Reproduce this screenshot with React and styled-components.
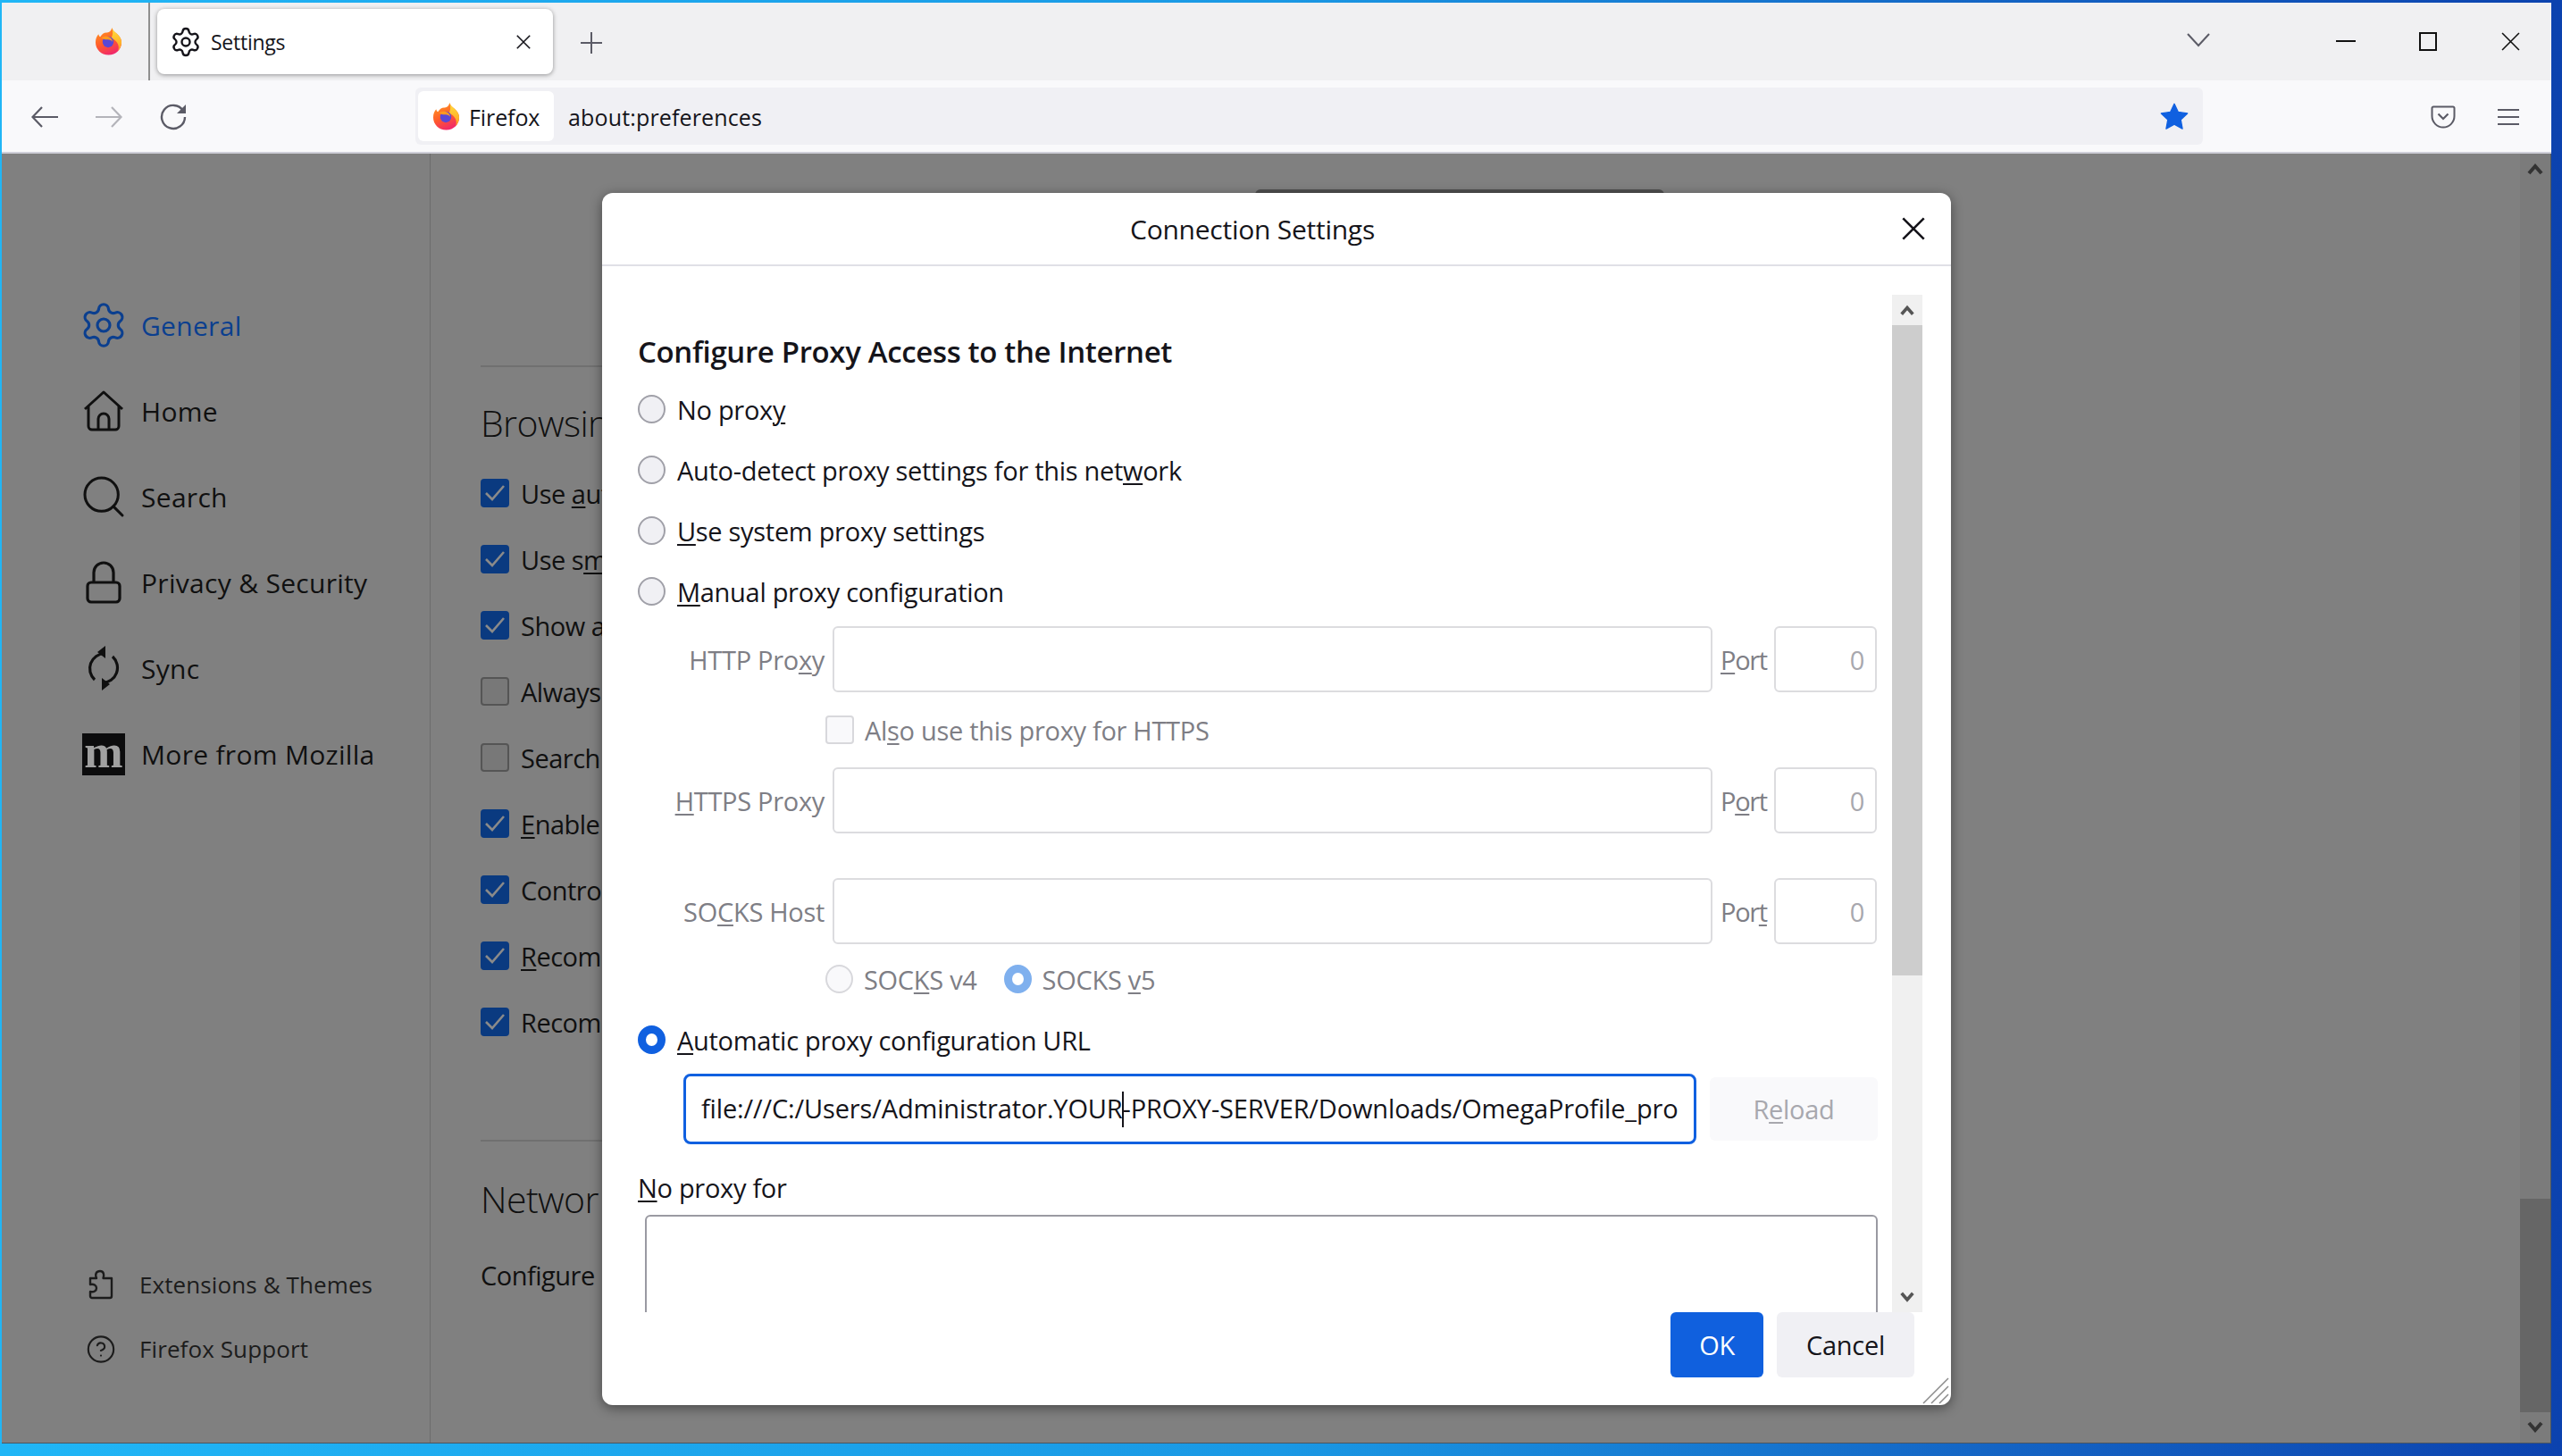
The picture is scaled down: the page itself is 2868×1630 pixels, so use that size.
import React from 'react';
import styled, { createGlobalStyle } from 'styled-components';
import { Settings as GearIcon, Search as SearchIcon, CircleHelp } from 'lucide-react';

const FONT = '"Open Sans", "Noto Sans", "Liberation Sans", sans-serif';

const Global = createGlobalStyle`
  html, body { margin: 0; padding: 0; background: #1a98e4; }
  * { box-sizing: border-box; }
  u { text-underline-offset: 3px; text-decoration-thickness: 2px; }
`;

const Desktop = styled.div`
  position: relative;
  width: 2868px;
  height: 1630px;
  overflow: hidden;
  padding: 3px 12px 14px 2px;
  background: linear-gradient(90deg, #20b6f6 0%, #1a98e4 50%, #1464c4 78%, #0c42ae 100%);
  font-family: ${FONT};
  color: #15141a;
`;

const Window = styled.div`
  display: flex;
  flex-direction: column;
  height: 100%;
`;

/* browser chrome */
const TabStrip = styled.div`
  display: flex;
  align-items: flex-start;
  height: 87px;
  flex: none;
  background: #f0f0f2;
`;

const PinnedTab = styled.div`
  display: flex;
  align-items: center;
  justify-content: center;
  width: 166px;
  height: 87px;
  padding-left: 74px;
  padding-right: 0;
  border-right: 2px solid #8f8f8f;
  flex: none;
`;

const ActiveTab = styled.div`
  display: flex;
  align-items: center;
  width: 443px;
  height: 73px;
  margin: 7px 0 0 8px;
  padding: 0 25px 0 14px;
  background: #fff;
  border-radius: 8px;
  box-shadow: 0 1px 5px rgba(0, 0, 0, 0.4);
  flex: none;
  svg { flex: none; }
`;

const TabTitle = styled.span`
  margin-left: 10px;
  font-size: 23px;
  letter-spacing: -0.25px;
  flex: 1;
`;

const NewTab = styled.div`
  display: flex;
  margin: 33px 0 0 31px;
  color: #5b5b66;
`;

const StripRight = styled.div`
  display: flex;
  align-items: center;
  height: 87px;
  margin-left: auto;
  color: #111;
`;

const ListTabs = styled.div`
  display: flex;
  margin-right: 106px;
  margin-top: -3px;
  color: #5b5b66;
`;

const Caption = styled.div`
  display: flex;
  justify-content: center;
  width: 92px;
`;

const Toolbar = styled.div`
  display: flex;
  align-items: center;
  height: 82px;
  flex: none;
  background: #f9f9fb;
  border-bottom: 2px solid #cfcfd8;
  padding-left: 33px;
`;

const NavButtons = styled.div`
  display: flex;
  align-items: center;
  gap: 42px;
  width: 430px;
  margin-top: 2px;
  color: #5b5b66;
`;

const UrlBar = styled.div`
  display: flex;
  align-items: center;
  width: 2001px;
  height: 64px;
  padding: 0 16px 0 3px;
  background: #f0f0f4;
  border-radius: 6px;
`;

const Identity = styled.div`
  display: flex;
  align-items: center;
  width: 152px;
  height: 56px;
  padding-left: 16px;
  background: #fff;
  border-radius: 6px;
  font-size: 25px;
  letter-spacing: -0.1px;
  gap: 10px;
  span { padding-top: 2px; }
`;

const UrlText = styled.span`
  margin-left: 16px;
  padding-top: 2px;
  font-size: 25px;
  letter-spacing: 0.15px;
  flex: 1;
`;

const ToolbarRight = styled.div`
  display: flex;
  align-items: center;
  margin: 1px 0 0 255px;
  gap: 47px;
  color: #5b5b66;
`;

/* dimmed preferences page */
const Page = styled.div`
  display: flex;
  flex: 1;
  min-height: 0;
  background: #808080;
  border-bottom: 1px solid #4a5560;
  border-right: 1px solid #4a5560;
  color: #101010;
`;

const Sidebar = styled.div`
  display: flex;
  flex-direction: column;
  width: 480px;
  flex: none;
  border-right: 1px solid #6c6c6c;
  padding: 144px 0 69px 90px;
`;

const NavRow = styled.div`
  display: flex;
  align-items: center;
  height: 96px;
  gap: 18px;
  font-size: 30px;
  letter-spacing: 0.3px;
  color: ${p => (p.$active ? '#0b3f8f' : '#101010')};
`;

const NavIcon = styled.div`
  display: flex;
  align-items: center;
  justify-content: center;
  width: 48px;
  height: 48px;
  svg { flex: none; }
`;

const MozillaMark = styled.div`
  display: flex;
  align-items: center;
  justify-content: center;
  width: 48px;
  height: 47px;
  padding-bottom: 6px;
  background: #0c0c0d;
  color: #a0a0a0;
  font-family: "Liberation Serif", serif;
  font-weight: 700;
  font-size: 52px;
  line-height: 41px;
  letter-spacing: 0;
`;

const SideFooter = styled.div`
  display: flex;
  flex-direction: column;
  margin-top: auto;
  padding-left: 4px;
`;

const FooterRow = styled.div`
  display: flex;
  align-items: center;
  height: 72px;
  gap: 26px;
  font-size: 26px;
  letter-spacing: 0.1px;
  color: #1c1c1c;
`;

const FooterIcon = styled.div`
  display: flex;
  justify-content: center;
  width: 34px;
`;

const Content = styled.div`
  flex: 1;
  min-width: 0;
  padding-left: 56px;
  overflow: hidden;
`;

const HiddenBox = styled.div`
  width: 458px;
  height: 60px;
  margin: 40px 0 137px 867px;
  border-top: 4px solid #505050;
  border-radius: 6px 6px 0 0;
`;

const Divider = styled.div`
  width: 1000px;
  height: 2px;
  margin-top: ${p => p.$top || 0}px;
  background: #707070;
`;

const SectionTitle = styled.div`
  width: 136px;
  height: 60px;
  margin-top: ${p => p.$top}px;
  overflow: hidden;
  font-size: 41px;
  line-height: 60px;
  font-weight: 300;
  white-space: nowrap;
  letter-spacing: -0.6px;
`;

const PrefList = styled.div`
  margin-top: 12px;
`;

const PrefRow = styled.div`
  display: flex;
  align-items: center;
  width: 136px;
  height: 74px;
  gap: 13px;
  overflow: hidden;
  font-size: 29px;
  white-space: nowrap;
  letter-spacing: -0.5px;
`;

const PrefBox = styled.div`
  display: flex;
  align-items: center;
  justify-content: center;
  width: 32px;
  height: 32px;
  border-radius: 4px;
  flex: none;
  background: ${p => (p.$on ? '#0a3a80' : '#787878')};
  border: 2px solid ${p => (p.$on ? '#0a3a80' : '#555')};
`;

const PlainLine = styled.div`
  margin-top: 36px;
  font-size: 29px;
  white-space: nowrap;
  letter-spacing: -0.5px;
`;

const PageScroll = styled.div`
  display: flex;
  flex-direction: column;
  width: 34px;
  flex: none;
  background: #7b7b7b;
`;

const ScrollEnd = styled.div`
  display: flex;
  align-items: center;
  justify-content: center;
  height: 34px;
  flex: none;
  color: ${p => p.$color || '#333'};
`;

const PageThumb = styled.div`
  height: 239px;
  margin-top: auto;
  background: #666;
`;

/* dialog */
const Dialog = styled.div`
  position: absolute;
  left: 674px;
  top: 216px;
  display: flex;
  flex-direction: column;
  width: 1510px;
  height: 1357px;
  background: #fff;
  border-radius: 12px;
  box-shadow: 0 3px 14px rgba(0, 0, 0, 0.45);
  color: #15141a;
  overflow: hidden;
`;

const DialogHeader = styled.div`
  display: flex;
  align-items: center;
  height: 82px;
  flex: none;
  padding: 0 29px 0 591px;
  border-bottom: 2px solid #e0e0e6;
`;

const DialogTitle = styled.div`
  font-size: 30px;
  font-weight: 500;
  letter-spacing: -0.25px;
`;

const DialogClose = styled.div`
  display: flex;
  margin-left: auto;
`;

const DialogBody = styled.div`
  display: flex;
  height: 1171px;
  flex: none;
`;

const Form = styled.div`
  flex: 1;
  min-width: 0;
  padding: 71px 16px 0 40px;
  overflow: hidden;
  font-size: 29px;
  letter-spacing: -0.3px;
`;

const FormTitle = styled.div`
  height: 50px;
  margin-bottom: 5px;
  font-size: 33px;
  line-height: 50px;
  font-weight: 600;
  letter-spacing: -0.35px;
`;

const OptionRow = styled.div`
  display: flex;
  align-items: center;
  height: ${p => p.$h || 68}px;
  margin-left: ${p => p.$left || 0}px;
  gap: ${p => (p.$muted ? 12 : 13)}px;
  color: ${p => (p.$muted ? '#7e7e85' : 'inherit')};
`;

const Radio = styled.div`
  width: 31px;
  height: 32px;
  border-radius: 50%;
  flex: none;
  border: ${p => {
    if (p.$state === 'on') return '9px solid #1060e0';
    if (p.$state === 'soft') return '9px solid #7fb0ee';
    if (p.$state === 'off') return '2px solid #d8d8dc';
    return '2px solid #a0a0a8';
  }};
  background: ${p => (p.$state === 'on' || p.$state === 'soft' ? '#fff' : p.$state === 'off' ? '#f9f9fb' : '#f0f0f4')};
`;

const RadioSecond = styled(Radio)`
  margin-left: 18px;
`;

const MutedBox = styled.div`
  width: 32px;
  height: 32px;
  border-radius: 4px;
  flex: none;
  background: #f9f9fb;
  border: 2px solid #d8d8dc;
`;

const ProxyRow = styled.div`
  display: flex;
  align-items: center;
  gap: 9px;
  height: 74px;
  margin-top: ${p => p.$top || 0}px;
  color: #7e7e85;
`;

const ProxyLabel = styled.div`
  width: 209px;
  text-align: right;
  flex: none;
`;

const Field = styled.div`
  display: flex;
  align-items: center;
  justify-content: flex-end;
  width: ${p => p.$w}px;
  height: 74px;
  flex: none;
  padding-right: 12px;
  border: 2px solid #dcdcdf;
  border-radius: 6px;
  color: #a8a8ae;
`;

const PortLabel = styled.div`
  width: 51px;
  flex: none;
  white-space: nowrap;
  letter-spacing: -1.3px;
`;

const UrlRow = styled.div`
  display: flex;
  align-items: center;
  gap: 15px;
  height: 79px;
  margin: 9px 0 0 51px;
`;

const UrlField = styled.div`
  display: flex;
  align-items: center;
  width: 1134px;
  height: 79px;
  flex: none;
  padding: 0 17px;
  border: 3px solid #1060e0;
  border-radius: 8px;
  white-space: nowrap;
  overflow: hidden;
  line-height: 40px;
  letter-spacing: -0.15px;
`;

const Caret = styled.span`
  display: inline-block;
  width: 2px;
  height: 40px;
  margin: 0 -1px;
  vertical-align: -10px;
  background: #15141a;
`;

const ReloadButton = styled.div`
  display: flex;
  align-items: center;
  justify-content: center;
  width: 188px;
  height: 71px;
  flex: none;
  background: #f9f9fb;
  border-radius: 6px;
  color: #a8a8ae;
`;

const NoProxyLabel = styled.div`
  height: 50px;
  margin-top: 24px;
  line-height: 50px;
`;

const NoProxyArea = styled.div`
  width: 1380px;
  height: 200px;
  margin: 5px 0 0 8px;
  border: 2px solid #9a9aa2;
  border-radius: 6px;
`;

const FormScroll = styled.div`
  display: flex;
  flex-direction: column;
  justify-content: space-between;
  width: 34px;
  flex: none;
  margin: 32px 32px 0 0;
  background: #f0f0f0;
`;

const FormThumbGroup = styled.div`
  display: flex;
  flex-direction: column;
`;

const FormThumb = styled.div`
  height: 728px;
  flex: none;
  background: #cdcdcd;
`;

const DialogFooter = styled.div`
  position: relative;
  display: flex;
  justify-content: flex-end;
  gap: 15px;
  flex: 1;
  padding-right: 41px;
`;

const DialogButton = styled.div`
  display: flex;
  align-items: center;
  justify-content: center;
  width: ${p => p.$w}px;
  height: 73px;
  font-size: 29px;
  letter-spacing: -0.3px;
  border-radius: 6px;
  background: ${p => (p.$primary ? '#1060de' : '#f0f0f4')};
  color: ${p => (p.$primary ? '#fff' : '#15141a')};
`;

const Resizer = styled.svg`
  position: absolute;
  right: 2px;
  bottom: 1px;
`;

/* drawings */
const FirefoxLogo = ({ size = 31 }) => (
  <svg width={size} height={size} viewBox="0 0 32 32">
    <defs>
      <linearGradient id="ffBody" x1="0.2" y1="0" x2="0.6" y2="1">
        <stop offset="0" stopColor="#ff9a1f" />
        <stop offset="0.55" stopColor="#ff5a2c" />
        <stop offset="1" stopColor="#f0266e" />
      </linearGradient>
      <linearGradient id="ffFlame" x1="0.5" y1="0" x2="0.5" y2="1">
        <stop offset="0" stopColor="#ffe23e" />
        <stop offset="1" stopColor="#ff9a1f" />
      </linearGradient>
    </defs>
    <path d="M20 0c.6 3.2 3 4.6 5.6 7C29 10 31 13 31 17c0 8-6.6 14.5-15 14.5S1 25 1 17C1 13 2.6 9.6 4.4 7.6c.4 1.6 1 2.6 2 3C8 7.5 11 5.4 14 5.6c3 .2 5-2 6-5.6z" fill="url(#ffBody)" />
    <path d="M20 0c.6 3.2 3 4.6 5.6 7C29 10 31 13 31 17c0 4-1.6 7.4-4.2 10 1-2.4 1.2-5 .2-7.6-1.2-3.6-4.4-6.2-8-7.4 2-3 2.4-7.4 1-12z" fill="url(#ffFlame)" />
    <circle cx="15.5" cy="16.5" r="6.4" fill="#5a47d6" />
    <path d="M7.6 11.6c3-2.2 8.6-2.2 11 .4 1.4 1.4 2 2.8 2.2 4.4-1.2-1.8-3.6-3-6-2.8-2.2.2-4.6 0-7.2-2z" fill="#ff9a1f" />
  </svg>
);

const HomeIcon = () => (
  <svg width="46" height="46" viewBox="0 0 46 46" fill="none" stroke="currentColor" strokeWidth="3" strokeLinejoin="round">
    <path d="M2 21 L23 2 L44 21 M6 18 V40 a4 4 0 0 0 4 4 H36 a4 4 0 0 0 4-4 V18" />
    <path d="M17 44 V32 a6 6 0 0 1 12 0 V44" />
  </svg>
);

const LockIcon = () => (
  <svg width="40" height="48" viewBox="0 0 40 48" fill="none" stroke="currentColor" strokeWidth="3.2">
    <path d="M9 24 V13 a11 11 0 0 1 22 0 V24" />
    <rect x="2" y="24" width="36" height="22" rx="4" />
  </svg>
);

const SyncIcon = () => (
  <svg width="38" height="50" viewBox="0 0 38 50" fill="none" stroke="currentColor" strokeWidth="3.2">
    <path d="M20 8.5 A17 17 0 0 0 9 38" />
    <path d="M18 41.5 A17 17 0 0 0 29 12" />
    <path d="M21 0 L21 14 L12 7 Z" fill="currentColor" stroke="none" />
    <path d="M17 50 L17 36 L26 43 Z" fill="currentColor" stroke="none" />
  </svg>
);

const PuzzleIcon = () => (
  <svg width="28" height="34" viewBox="0 0 28 34" fill="none" stroke="currentColor" strokeWidth="2.4" strokeLinejoin="round">
    <path d="M2 10 H9 C7 5 9 2 13 2 C17 2 18 6 16.5 10 H26 V30 a2 2 0 0 1-2 2 H4 a2 2 0 0 1-2-2 V25 C6 26 9 24 9 21 C9 18 6 16 2 17 Z" />
  </svg>
);

const PocketIcon = () => (
  <svg width="28" height="26" viewBox="0 0 28 26" fill="none" stroke="currentColor" strokeWidth="2">
    <path d="M3 1.5 H25 a1.5 1.5 0 0 1 1.500 1.500 V12 a12.500 12.500 0 0 1-25 0 V3 a1.500 1.500 0 0 1 1.500-1.500 Z" />
    <path d="M8.500 9.500 L14 15 L19.500 9.500" strokeWidth="2.2" />
  </svg>
);

const Chevron = ({ up, size = 20 }) => (
  <svg width={size} height={size * 0.7} viewBox="0 0 20 14" fill="none" stroke="currentColor" strokeWidth="4">
    <path d={up ? 'M3 12 L10 4 L17 12' : 'M3 2 L10 10 L17 2'} />
  </svg>
);

const Cross = ({ size, weight = 2 }) => (
  <svg width={size} height={size} viewBox="0 0 20 20" stroke="currentColor" strokeWidth={weight} fill="none">
    <path d="M1 1 L19 19 M19 1 L1 19" />
  </svg>
);

const Check = () => (
  <svg width="24" height="20" viewBox="0 0 24 20" fill="none" stroke="#8a8a8a" strokeWidth="2.600">
    <path d="M2 10 L9 17 L22 2" />
  </svg>
);

const prefs = [
  [true, <>Use <u>a</u>ut</>],
  [true, <>Use s<u>m</u></>],
  [true, <>Show a</>],
  [false, <>Always</>],
  [false, <>Search</>],
  [true, <><u>E</u>nable</>],
  [true, <>Contro</>],
  [true, <><u>R</u>ecom</>],
  [true, <>Recom</>],
];

const App = () => (
  <Desktop>
    <Global />
    <Window>
      <TabStrip>
        <PinnedTab><FirefoxLogo /></PinnedTab>
        <ActiveTab>
          <GearIcon size={36} strokeWidth={1.6} color="#15141a" />
          <TabTitle>Settings</TabTitle>
          <Cross size={16} />
        </ActiveTab>
        <NewTab>
          <svg width="24" height="24" viewBox="0 0 24 24" stroke="currentColor" strokeWidth="2">
            <path d="M12 0 V24 M0 12 H24" />
          </svg>
        </NewTab>
        <StripRight>
          <ListTabs>
            <svg width="26" height="16" viewBox="0 0 26 16" fill="none" stroke="currentColor" strokeWidth="2">
              <path d="M1 1 L13 14 L25 1" />
            </svg>
          </ListTabs>
          <Caption>
            <svg width="22" height="3"><rect width="22" height="2" fill="#111" /></svg>
          </Caption>
          <Caption>
            <svg width="20" height="21" viewBox="0 0 20 21" fill="none" stroke="#111" strokeWidth="2"><rect x="1" y="1" width="18" height="19" /></svg>
          </Caption>
          <Caption><Cross size={21} weight={1.5} /></Caption>
        </StripRight>
      </TabStrip>
      <Toolbar>
        <NavButtons>
          <svg width="30" height="24" viewBox="0 0 30 24" fill="none" stroke="currentColor" strokeWidth="2.2">
            <path d="M30 12 H2 M12 1 L1.500 12 L12 23" />
          </svg>
          <svg width="30" height="24" viewBox="0 0 30 24" fill="none" stroke="#b4b4ba" strokeWidth="2.2">
            <path d="M0 12 H28 M18 1 L28.500 12 L18 23" />
          </svg>
          <svg width="30" height="30" viewBox="0 0 30 30" fill="none" stroke="currentColor" strokeWidth="2.4">
            <path d="M26 8 A13 13 0 1 0 28 15" />
            <path d="M29 1 V11 H19 Z" fill="currentColor" stroke="none" />
          </svg>
        </NavButtons>
        <UrlBar>
          <Identity><FirefoxLogo /><span>Firefox</span></Identity>
          <UrlText>about:preferences</UrlText>
          <svg width="32" height="31" viewBox="0 0 24 23" fill="#1060e0">
            <path d="M12 .8 L15.300 7.700 L23 8.800 L17.400 14.100 L18.800 21.700 L12 18 L5.200 21.700 L6.600 14.100 L1 8.800 L8.700 7.700 Z" stroke="#1060e0" strokeLinejoin="round" />
          </svg>
        </UrlBar>
        <ToolbarRight>
          <PocketIcon />
          <svg width="24" height="18" viewBox="0 0 24 18" stroke="currentColor" strokeWidth="2"><path d="M0 1 H24 M0 9 H24 M0 17 H24" /></svg>
        </ToolbarRight>
      </Toolbar>
      <Page>
        <Sidebar>
          <NavRow $active>
            <NavIcon><GearIcon size={56} strokeWidth={1.35} /></NavIcon>
            General
          </NavRow>
          <NavRow>
            <NavIcon><HomeIcon /></NavIcon>
            Home
          </NavRow>
          <NavRow>
            <NavIcon><SearchIcon size={56} strokeWidth={1.3} /></NavIcon>
            Search
          </NavRow>
          <NavRow>
            <NavIcon><LockIcon /></NavIcon>
            Privacy &amp; Security
          </NavRow>
          <NavRow>
            <NavIcon><SyncIcon /></NavIcon>
            Sync
          </NavRow>
          <NavRow>
            <MozillaMark>m</MozillaMark>
            More from Mozilla
          </NavRow>
          <SideFooter>
            <FooterRow>
              <FooterIcon><PuzzleIcon /></FooterIcon>
              Extensions &amp; Themes
            </FooterRow>
            <FooterRow>
              <FooterIcon><CircleHelp size={37} strokeWidth={1.5} /></FooterIcon>
              Firefox Support
            </FooterRow>
          </SideFooter>
        </Sidebar>
        <Content>
          <HiddenBox />
          <Divider />
          <SectionTitle $top={32}>Browsin</SectionTitle>
          <PrefList>
            {prefs.map(([on, text], i) => (
              <PrefRow key={i}>
                <PrefBox $on={on}>{on && <Check />}</PrefBox>
                <span>{text}</span>
              </PrefRow>
            ))}
          </PrefList>
          <Divider $top={95} />
          <SectionTitle $top={34}>Networ</SectionTitle>
          <PlainLine>Configure</PlainLine>
        </Content>
        <PageScroll>
          <ScrollEnd><Chevron up /></ScrollEnd>
          <PageThumb />
          <ScrollEnd><Chevron /></ScrollEnd>
        </PageScroll>
      </Page>
    </Window>
    <Dialog>
      <DialogHeader>
        <DialogTitle>Connection Settings</DialogTitle>
        <DialogClose><Cross size={26} /></DialogClose>
      </DialogHeader>
      <DialogBody>
        <Form>
          <FormTitle>Configure Proxy Access to the Internet</FormTitle>
          <OptionRow><Radio /><span>No prox<u>y</u></span></OptionRow>
          <OptionRow><Radio /><span>Auto-detect proxy settings for this net<u>w</u>ork</span></OptionRow>
          <OptionRow><Radio /><span><u>U</u>se system proxy settings</span></OptionRow>
          <OptionRow><Radio /><span><u>M</u>anual proxy configuration</span></OptionRow>
          <ProxyRow $top={5}>
            <ProxyLabel>HTTP Pro<u>x</u>y</ProxyLabel>
            <Field $w={985} />
            <PortLabel><u>P</u>ort</PortLabel>
            <Field $w={115}>0</Field>
          </ProxyRow>
          <OptionRow $h={84} $left={210} $muted>
            <MutedBox />
            <span>Al<u>s</u>o use this proxy for HTTPS</span>
          </OptionRow>
          <ProxyRow>
            <ProxyLabel><u>H</u>TTPS Proxy</ProxyLabel>
            <Field $w={985} />
            <PortLabel>P<u>o</u>rt</PortLabel>
            <Field $w={115}>0</Field>
          </ProxyRow>
          <ProxyRow $top={50}>
            <ProxyLabel>SO<u>C</u>KS Host</ProxyLabel>
            <Field $w={985} />
            <PortLabel>Por<u>t</u></PortLabel>
            <Field $w={115}>0</Field>
          </ProxyRow>
          <OptionRow $h={78} $left={210} $muted>
            <Radio $state="off" />
            <span>SOC<u>K</u>S v4</span>
            <RadioSecond $state="soft" />
            <span>SOCKS <u>v</u>5</span>
          </OptionRow>
          <OptionRow $h={58}><Radio $state="on" /><span><u>A</u>utomatic proxy configuration URL</span></OptionRow>
          <UrlRow>
            <UrlField><span>file:///C:/Users/Administrator.YOUR<Caret />-PROXY-SERVER/Downloads/OmegaProfile_pro</span></UrlField>
            <ReloadButton><span>R<u>e</u>load</span></ReloadButton>
          </UrlRow>
          <NoProxyLabel><u>N</u>o proxy for</NoProxyLabel>
          <NoProxyArea />
        </Form>
        <FormScroll>
          <FormThumbGroup>
            <ScrollEnd $color="#555"><Chevron up size={18} /></ScrollEnd>
            <FormThumb />
          </FormThumbGroup>
          <ScrollEnd $color="#555"><Chevron size={18} /></ScrollEnd>
        </FormScroll>
      </DialogBody>
      <DialogFooter>
        <DialogButton $primary $w={104}>OK</DialogButton>
        <DialogButton $w={154}>Cancel</DialogButton>
        <Resizer width="30" height="30" viewBox="0 0 30 30" stroke="#8a8a8a" strokeWidth="1.500">
          <path d="M1 29 L29 1 M10 29 L29 10 M19 29 L29 19" />
        </Resizer>
      </DialogFooter>
    </Dialog>
  </Desktop>
);

export default App;
